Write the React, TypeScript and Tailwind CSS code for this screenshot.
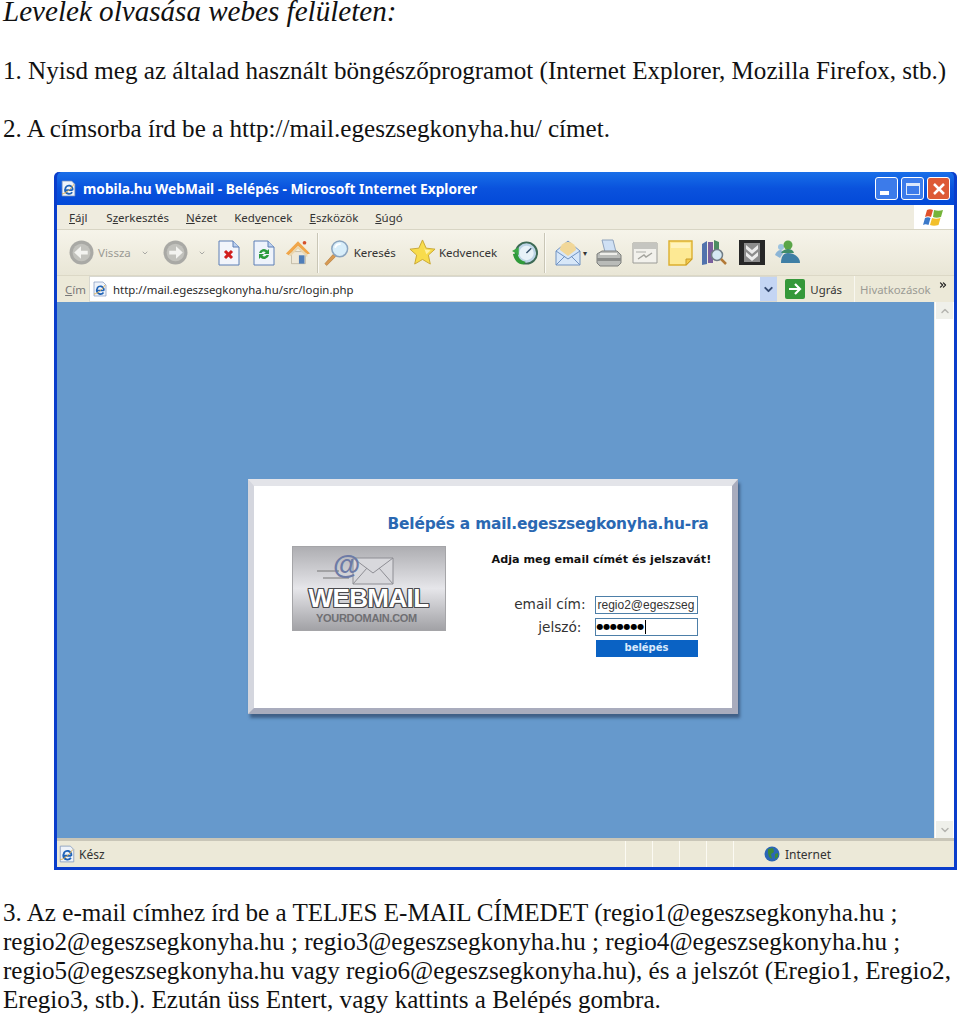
import type { ReactNode } from "react";
import { ChevronDown, ChevronUp, ChevronsRight } from "lucide-react";

const serif = "font-['Liberation_Serif','Times_New_Roman',serif]";
const ui = "font-['Noto_Sans','Open_Sans',sans-serif]";

function BackCircle({ flip, size = 25 }: { flip?: boolean; size?: number }) {
  return (
    <svg width={size} height={size} viewBox="0 0 24 24" className={flip ? "-scale-x-100" : ""}>
      <circle cx="12" cy="12" r="11.500" fill="#a9a9a5" />
      <circle cx="12" cy="12" r="8.500" fill="#c2c2bd" />
      <path d="M18 10.200h-6.500V6L5 12l6.500 6v-4.200H18z" fill="#f3f3f0" />
    </svg>
  );
}

function StopIcon() {
  return (
    <svg width="22" height="26" viewBox="0 0 22 26">
      <path d="M1 1h14l6 6v18H1z" fill="#f2f5fb" stroke="#5d7fb5" />
      <path d="M15 1v6h6" fill="#bcd0ee" stroke="#5d7fb5" />
      <path d="M7 11l7 7M14 11l-7 7" stroke="#d11e1e" strokeWidth="3" />
    </svg>
  );
}

function RefreshIcon() {
  return (
    <svg width="22" height="26" viewBox="0 0 22 26">
      <path d="M1 1h14l6 6v18H1z" fill="#eef3fb" stroke="#5d7fb5" />
      <path d="M15 1v6h6" fill="#bcd0ee" stroke="#5d7fb5" />
      <path d="M6 13a5 5 0 0 1 8.500-2.500L16 9v5h-5l1.700-1.700A3 3 0 0 0 8.500 13z" fill="#2a9b3c" />
      <path d="M16 15a5 5 0 0 1-8.500 2.500L6 19v-5h5l-1.700 1.700a3 3 0 0 0 4.200-.7z" fill="#2a9b3c" />
    </svg>
  );
}

function HomeIcon() {
  return (
    <svg width="26" height="27" viewBox="0 0 28 28">
      <path d="M7 13h15v13H7z" fill="#eee8d8" stroke="#a79d85" strokeWidth=".6" />
      <path d="M1 15L14 2l13 13-3 1L14 7 4 17z" fill="#f0a64a" />
      <path d="M14 7l10 9v3L14 10 6 18l-2-1z" fill="#e9d6ae" />
      <path d="M15 17h6v9h-6z" fill="#4f7eb9" />
      <circle cx="21" cy="3.500" r="2" fill="#d4512c" />
    </svg>
  );
}

function SearchIcon() {
  return (
    <svg width="26" height="29" viewBox="0 0 28 30">
      <path d="M2 27l9-10 2.500 2.500L4 29z" fill="#d89a52" stroke="#a86e2e" strokeWidth=".6" />
      <circle cx="18" cy="11" r="8.500" fill="#d8eefa" stroke="#8ba5bf" strokeWidth="1.600" />
      <path d="M13 10a5.500 5.500 0 0 1 6-4" stroke="#fff" strokeWidth="2" fill="none" />
    </svg>
  );
}

function StarIcon() {
  return (
    <svg width="27" height="27" viewBox="0 0 28 28">
      <path d="M14 1l3.800 8.500 9.200 1-6.900 6.200 2 9.300-8.100-4.800L5.900 26l2-9.300L1 10.500l9.200-1z" fill="#f8dc4c" stroke="#c9a834" strokeWidth="1" />
      <path d="M14 5l2.500 6 6 .7-4.500 4" fill="#fdf2a2" />
    </svg>
  );
}

function HistoryIcon() {
  return (
    <svg width="26" height="26" viewBox="0 0 27 26">
      <circle cx="15" cy="13" r="11" fill="#bcd4e6" stroke="#3d6a55" strokeWidth="2" />
      <circle cx="15" cy="13" r="7.500" fill="#e8f2f8" />
      <path d="M15 13l5-5" stroke="#35516b" strokeWidth="1.500" />
      <path d="M1 14l5-1c0 5 3 8 8 9l-2 3C6 25 2 20 1 14z" fill="#2f9a3a" />
      <path d="M0 11l7-4v8z" fill="#3aa845" />
    </svg>
  );
}

function MailIcon() {
  return (
    <svg width="26" height="28" viewBox="0 0 26 28">
      <path d="M1 12L13 2l12 10v14H1z" fill="#d7e7f8" stroke="#7193c2" />
      <path d="M5 11a8 8 0 0 1 16 0l-8 6z" fill="#f1d798" />
      <path d="M1 12l12 8 12-8M1 26l9-9M25 26l-9-9" fill="none" stroke="#7193c2" />
    </svg>
  );
}

function PrinterIcon() {
  return (
    <svg width="26" height="28" viewBox="0 0 26 28">
      <path d="M6 1h11l3 12H9z" fill="#cfe0f4" stroke="#8fa3bd" />
      <path d="M1 15l5-3h15l4 4v8l-3 3H4l-3-3z" fill="#b9bbb8" stroke="#7d7f7c" />
      <path d="M1 19h24v3H1z" fill="#8a8c8a" />
      <path d="M4 15h17" stroke="#eeeeea" strokeWidth="2" />
    </svg>
  );
}

function EditIcon() {
  return (
    <svg width="26" height="22" viewBox="0 0 26 22">
      <path d="M1 1h24v20H1z" fill="#f2f1ec" stroke="#9b9b97" />
      <path d="M1 1h24v6H1z" fill="#c5c5c0" />
      <path d="M6 17l6-4 2 2 6-4" stroke="#a3a39d" strokeWidth="1.400" fill="none" />
      <path d="M4 10h10" stroke="#cfcfca" strokeWidth="2" />
    </svg>
  );
}

function NoteIcon() {
  return (
    <svg width="25" height="26" viewBox="0 0 25 26">
      <path d="M1 1h23v18l-6 6H1z" fill="#fde994" stroke="#dcae2e" strokeWidth="1.400" />
      <path d="M24 19h-6v6z" fill="#f2c94b" stroke="#c99c28" />
      <path d="M3 3h19v5H3z" fill="#fff3bd" />
    </svg>
  );
}

function ResearchIcon() {
  return (
    <svg width="26" height="27" viewBox="0 0 26 27">
      <path d="M1 5l5-3v23l-5 1z" fill="#5173ad" />
      <path d="M7 3h5v21H7z" fill="#7a5f9d" />
      <path d="M13 1l5 2v8h-5z" fill="#4d8d63" />
      <circle cx="16" cy="16" r="5.500" fill="#d5e9f4" stroke="#707c86" strokeWidth="1.500" />
      <path d="M20 20l5 5" stroke="#b37a38" strokeWidth="2.500" />
    </svg>
  );
}

function MediaIcon() {
  return (
    <svg width="26" height="25" viewBox="0 0 26 25">
      <path d="M0 0h26v25H0z" fill="#272727" />
      <path d="M5 3h16v19H5z" fill="#8c8c8c" />
      <path d="M7 5l6 5 6-5v4l-6 5-6-5zM7 12l6 5 6-5v4l-6 5-6-5z" fill="#ececec" />
    </svg>
  );
}

function MessengerIcon() {
  return (
    <svg width="27" height="25" viewBox="0 0 27 25">
      <circle cx="7" cy="7" r="3" fill="#9cc3e0" />
      <path d="M1 15c1-3 3-5 6-5l3 2-4 6z" fill="#8cb5d6" />
      <circle cx="14" cy="5" r="4.500" fill="#5aa548" />
      <path d="M7 13c2-3 4-4 7-4 3 0 5 1 6 4z" fill="#3f8c6a" />
      <path d="M7 23c0-6 2-10 7-10 6 0 12 4 12 10z" fill="#3f7fa5" />
    </svg>
  );
}

function IeMini({ size = 16 }: { size?: number }) {
  return (
    <svg width={size} height={size} viewBox="0 0 16 16">
      <path d="M2 1h9l3 3v11H2z" fill="#eef3fa" stroke="#8097bd" strokeWidth=".7" />
      <path d="M11.800 9.500H5M5 8a3.400 3.400 0 0 1 6.800 1.500M11.500 11.500A3.800 3.800 0 0 1 4.700 9.500 4 4 0 0 1 5 8" fill="none" stroke="#1f63b8" strokeWidth="1.700" />
      <path d="M2 13c3 0 9-5 11-9" stroke="#e0a83c" strokeWidth=".8" fill="none" />
    </svg>
  );
}

function WinFlag() {
  return (
    <svg width="23" height="21" viewBox="0 0 23 21">
      <path d="M4 3c2-1 4-1 6 0l-2 7c-2-1-4-1-6 0z" fill="#e0512b" />
      <path d="M11 3c3 1 6 1 9 0l-2 7c-3 1-6 1-8 0z" fill="#75b43a" />
      <path d="M2 11c2-1 4-1 5.500 0l-2 7c-2-1-4-1-5.500 0z" fill="#3b79c9" />
      <path d="M9 11c3 1 5 1 8.500 0l-2 7c-3 1-6 1-8.500 0z" fill="#f2bf2a" />
    </svg>
  );
}

function GlobeIcon() {
  return (
    <svg width="16" height="16" viewBox="0 0 16 16">
      <circle cx="8" cy="8" r="7.500" fill="#2a66b5" />
      <path d="M4 3l5-1 1 4-3 2 1 5-3-2-1-4zM11 8l3-1 0 4-3 2z" fill="#3c8a3a" />
    </svg>
  );
}

function ToolSep() {
  return <div className="h-[40px] w-[2px] border-l border-[#c9c6b6] bg-[#fbfaf4]" />;
}

function MenuItem({ lead = "", hot, rest }: { lead?: string; hot: string; rest: string }) {
  return (
    <span>
      {lead}
      <span className="underline">{hot}</span>
      {rest}
    </span>
  );
}

function Toolbar() {
  return (
    <div className={`${ui} flex h-[46px] items-center border-b border-[#dcd8c6] bg-gradient-to-b from-[#f6f4ea] to-[#e9e6d6] pl-[12px] text-[11.500px] text-[#333]`}>
      <BackCircle />
      <span className="ml-[4px] text-[#9a9a94]">Vissza</span>
      <ChevronDown size={8} strokeWidth={3} className="ml-[10px] text-[#a9a9a5]" />
      <div className="ml-[14px]"><BackCircle flip /></div>
      <ChevronDown size={8} strokeWidth={3} className="ml-[10px] text-[#a9a9a5]" />
      <div className="ml-[12px]"><StopIcon /></div>
      <div className="ml-[13px]"><RefreshIcon /></div>
      <div className="ml-[10px]"><HomeIcon /></div>
      <div className="ml-[6px] mr-[4px]"><ToolSep /></div>
      <SearchIcon />
      <span className="ml-[5px]">Keresés</span>
      <div className="ml-[13px]"><StarIcon /></div>
      <span className="ml-[3px]">Kedvencek</span>
      <div className="ml-[15px]"><HistoryIcon /></div>
      <div className="ml-[6px] mr-[9px]"><ToolSep /></div>
      <MailIcon />
      <span className="ml-[2px] mr-[9px] text-[8px] leading-none">▾</span>
      <PrinterIcon />
      <div className="ml-[10px]"><EditIcon /></div>
      <div className="ml-[10px]"><NoteIcon /></div>
      <div className="ml-[8px]"><ResearchIcon /></div>
      <div className="ml-[12px]"><MediaIcon /></div>
      <div className="ml-[9px]"><MessengerIcon /></div>
    </div>
  );
}

function AddressBar() {
  return (
    <div className={`${ui} flex h-[26px] items-stretch bg-[#ece9d8] text-[11.400px] text-[#333]`}>
      <span className="flex w-[32px] shrink-0 items-center justify-center pl-[5px] text-[#777]">
        <span><span className="underline">C</span>ím</span>
      </span>
      <div className="flex flex-1 items-center gap-[5px] border-y border-l border-[#d8d8d0] bg-white pl-[2px]">
        <IeMini />
        <span className="text-[#2a2a2a]">http://mail.egeszsegkonyha.hu/src/login.php</span>
      </div>
      <div className="flex w-[17px] shrink-0 items-center justify-center border-y border-[#d8d8d0] bg-[#c4d5f3] text-[#34496f]">
        <ChevronDown size={13} strokeWidth={3.500} />
      </div>
      <div className="ml-[8px] flex shrink-0 items-center">
        <span className="flex h-[20px] w-[20px] items-center justify-center rounded-[2px] bg-[#35983a]">
          <svg width="14" height="14" viewBox="0 0 14 14"><path d="M1 7h10M7 2l5 5-5 5" fill="none" stroke="#fff" strokeWidth="2.200" /></svg>
        </span>
        <span className="ml-[5px]">Ugrás</span>
      </div>
      <div className="ml-[12px] flex w-[100px] shrink-0 items-center border-l border-[#f8f7f0] pl-[5px] text-[#9b9b94]">
        Hivatkozások
        <ChevronsRight size={10} strokeWidth={3} className="ml-[7px] -mt-[8px] text-[#222]" />
      </div>
    </div>
  );
}

function WebmailLogo() {
  return (
    <div className="relative flex h-[85px] w-[154px] flex-col items-center justify-end border border-[#a5a5a8] bg-gradient-to-b from-[#aeaeb2] via-[#e6e6ea] to-[#a2a2a6] pb-[5px] font-['Liberation_Sans',Arial,sans-serif]">
      <svg width="84" height="38" viewBox="0 0 84 38" className="absolute left-[22px] top-0">
        <path d="M2 24h22M8 31h26" stroke="#777" strokeWidth="1.200" />
        <path d="M38 11h40v26H38z" fill="#d8d8dc" stroke="#8e8e94" />
        <path d="M38 11l20 15 20-15M38 37l14-16M78 37L64 21" fill="none" stroke="#8e8e94" />
        <text x="18" y="27" fontSize="28" fontWeight="700" fill="#6d7ba6" fontFamily="Liberation Sans">@</text>
      </svg>
      <div className="relative text-[26px] font-bold leading-[28px] tracking-[-.6px] text-white [text-shadow:1px_0_#4a4a4e,-1px_0_#4a4a4e,0_1px_#4a4a4e,0_-1px_#4a4a4e,1px_1px_#4a4a4e,-1px_-1px_#4a4a4e,1px_-1px_#4a4a4e,-1px_1px_#4a4a4e]">WEBMAIL</div>
      <div className="pr-[4px] text-[11px] font-bold leading-[13px] tracking-[-.3px] text-[#6f6f73]">YOURDOMAIN.COM</div>
    </div>
  );
}

function LoginBox() {
  return (
    <div className="border-x-[6px] border-b-[6px] border-t-[7px] border-b-[#a9acbd] border-l-[#d4d6de] border-r-[#a9acbd] border-t-[#e3e4e9] bg-white shadow-[2px_4px_3px_#3f5f86]">
      <div className={`${ui} flex h-[222px] w-[478px] flex-col`}>
        <div className="mt-[28px] pr-[23px] text-right font-['DejaVu_Sans',sans-serif] text-[15.400px] font-bold leading-[20px] tracking-[-.2px] text-[#2a68b2]">
          Belépés a mail.egeszsegkonyha.hu-ra
        </div>
        <div className="mt-[11px] flex">
          <div className="ml-[38px] mt-[1px]">
            <WebmailLogo />
          </div>
          <div className="ml-[46px] flex flex-col font-['DejaVu_Sans',sans-serif]">
            <div className="mt-[7px] whitespace-nowrap text-[11.200px] font-bold leading-[15px] text-[#111]">
              Adja meg email címét és jelszavát!
            </div>
            <div className="mt-[29px] grid grid-cols-[94px_103px] items-center gap-x-[9px] gap-y-[4px] text-[13.700px] leading-none text-[#333]">
              <span className="pt-[1px] text-right">email cím:</span>
              <div className="flex h-[18px] items-center whitespace-nowrap border border-[#4d7fa8] pl-[2px] font-['Liberation_Sans',sans-serif] text-[12px]">
                regio2@egeszseg
              </div>
              <span className="pr-[4px] pt-[2px] text-right">jelszó:</span>
              <div className="flex h-[18px] items-center border border-[#4d7fa8] pl-[1px] text-[8px] tracking-[-.2px] text-black">
                ●●●●●●●<span className="ml-[1px] h-[14px] w-px bg-black" />
              </div>
              <span />
              <div className="ml-px flex h-[17px] items-center justify-center bg-[#0a62c4] text-[10px] font-bold text-[#dce9fb]">
                belépés
              </div>
            </div>
          </div>
        </div>
      </div>
    </div>
  );
}

function IeWindow({ children }: { children: ReactNode }) {
  return (
    <div className="ml-[54px] mr-[3px] mt-[29px] rounded-t-[5px] border-x-[3px] border-b-[3px] border-[#0a3dcb] bg-[#0a3dcb]">
      <div className={`${ui} flex h-[33px] items-center justify-between rounded-t-[5px] bg-gradient-to-b from-[#1a6fe8] via-[#0a52dd] to-[#0349d8] pl-[3px] pr-[4px]`}>
        <div className="flex items-center gap-[6px] text-[13.700px] font-bold text-white">
          <IeMini size={17} />
          mobila.hu WebMail - Belépés - Microsoft Internet Explorer
        </div>
        <div className="flex gap-[3px]">
          <div className="flex h-[23px] w-[23px] items-end rounded-[3px] border border-white bg-[#3c7bea] pb-[4px] pl-[4px]">
            <div className="h-[4px] w-[9px] bg-white" />
          </div>
          <div className="flex h-[23px] w-[23px] items-center justify-center rounded-[3px] border border-white bg-[#3c7bea]">
            <div className="h-[12px] w-[14px] border border-t-[3px] border-[#dbe7fb]" />
          </div>
          <div className="flex h-[23px] w-[23px] items-center justify-center rounded-[3px] border border-white bg-[#dd5a36] text-white">
            <svg width="14" height="14" viewBox="0 0 14 14"><path d="M2 2l10 10M12 2L2 12" stroke="#fff" strokeWidth="2.500" /></svg>
          </div>
        </div>
      </div>
      <div className={`${ui} flex h-[25px] items-stretch border-b border-[#d8d5c4] bg-[#efecdf] text-[11.500px] text-[#333]`}>
        <div className="flex flex-1 items-center gap-[17px] pl-[12px]">
          <span className="mr-[2px]"><MenuItem hot="F" rest="ájl" /></span>
          <MenuItem lead="S" hot="z" rest="erkesztés" />
          <MenuItem hot="N" rest="ézet" />
          <MenuItem lead="Ked" hot="v" rest="encek" />
          <MenuItem hot="E" rest="szközök" />
          <MenuItem hot="S" rest="úgó" />
        </div>
        <div className="flex w-[40px] items-center justify-center bg-white"><WinFlag /></div>
      </div>
      <Toolbar />
      <AddressBar />
      {children}
      <div className={`${ui} flex h-[29px] items-stretch border-t-[3px] border-[#c9c6b8] bg-[#ece9d8] text-[12px] text-[#333]`}>
        <div className="flex flex-1 items-center gap-[3px] pl-[1px]">
          <IeMini size={18} />
          Kész
        </div>
        <div className="w-[27px] border-l border-[#fbfaf3]" />
        <div className="w-[27px] border-l border-[#fbfaf3]" />
        <div className="w-[27px] border-l border-[#fbfaf3]" />
        <div className="w-[27px] border-l border-[#fbfaf3]" />
        <div className="flex w-[221px] items-center border-l border-[#fbfaf3] pl-[30px]">
          <GlobeIcon />
          <span className="ml-[5px]">Internet</span>
        </div>
      </div>
    </div>
  );
}

export default function App() {
  return (
    <div className={`${serif} h-[1016px] w-[960px] overflow-hidden bg-white text-[25.100px] leading-[29px] text-[#111]`}>
      <div className="pl-[3px] text-[29.100px] italic leading-[22px]">Levelek olvasása webes felületen:</div>
      <div className="mt-[34px] whitespace-nowrap pl-[3px]">
        1. Nyisd meg az általad használt böngészőprogramot (Internet Explorer, Mozilla Firefox, stb.)
      </div>
      <div className="mt-[29px] pl-[3px]">2. A címsorba írd be a http://mail.egeszsegkonyha.hu/ címet.</div>
      <IeWindow>
        <div className="flex h-[536px] bg-[#6699cc]">
          <div className="flex flex-1 items-center justify-center pr-[6px]">
            <div className="mb-[-52px]">
              <LoginBox />
            </div>
          </div>
          <div className="flex w-[20px] flex-col items-center justify-between border-l border-[#eeeee8] bg-white">
            <div className="flex h-[17px] w-[17px] items-center justify-center bg-[#eff0ea] text-[#b5b5b0]"><ChevronUp size={12} strokeWidth={3} /></div>
            <div className="flex h-[17px] w-[17px] items-center justify-center bg-[#eff0ea] text-[#b5b5b0]"><ChevronDown size={12} strokeWidth={3} /></div>
          </div>
        </div>
      </IeWindow>
      <div className="mt-[28px] pl-[3px] leading-[29px]">
        <div className="whitespace-nowrap">3. Az e-mail címhez írd be a TELJES E-MAIL CÍMEDET (regio1@egeszsegkonyha.hu ;</div>
        <div className="whitespace-nowrap">regio2@egeszsegkonyha.hu ; regio3@egeszsegkonyha.hu ; regio4@egeszsegkonyha.hu ;</div>
        <div className="whitespace-nowrap">regio5@egeszsegkonyha.hu vagy regio6@egeszsegkonyha.hu), és a jelszót (Eregio1, Eregio2,</div>
        <div className="whitespace-nowrap">Eregio3, stb.). Ezután üss Entert, vagy kattints a Belépés gombra.</div>
      </div>
    </div>
  );
}
